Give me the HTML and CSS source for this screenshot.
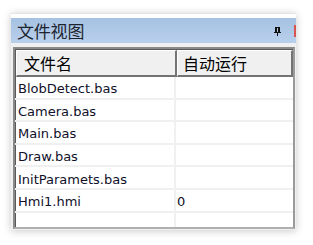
FILE: index.html
```html
<!DOCTYPE html>
<html>
<head>
<meta charset="utf-8">
<link rel="stylesheet" href="styles.css">
</head>
<body>
<div class="window">
  <div class="topgap"></div>
  <div class="titlebar">
    <span class="title">文件视图</span>
    <svg class="pin" width="7" height="9" viewBox="0 0 7 9">
      <rect x="1" y="0" width="5" height="1" fill="#111"/>
      <rect x="1" y="1" width="2" height="4" fill="#111"/>
      <rect x="4" y="1" width="2" height="4" fill="#111"/>
      <rect x="0" y="5" width="7" height="1" fill="#111"/>
      <rect x="3" y="6" width="1" height="3" fill="#111"/>
    </svg>
    <span class="closemark"></span>
  </div>
  <div class="gap"></div>
  <div class="list">
    <div class="header">
      <div class="hcell c1">文件名</div>
      <div class="hcell c2">自动运行</div>
    </div>
    <div class="rows">
      <div class="row"><div class="cell c1">BlobDetect.bas</div><div class="cell c2"></div></div>
      <div class="row"><div class="cell c1">Camera.bas</div><div class="cell c2"></div></div>
      <div class="row"><div class="cell c1">Main.bas</div><div class="cell c2"></div></div>
      <div class="row"><div class="cell c1">Draw.bas</div><div class="cell c2"></div></div>
      <div class="row"><div class="cell c1">InitParamets.bas</div><div class="cell c2"></div></div>
      <div class="row"><div class="cell c1">Hmi1.hmi</div><div class="cell c2">0</div></div>
      <div class="row filler"><div class="cell c1"></div><div class="cell c2"></div></div>
    </div>
  </div>
</div>
</body>
</html>
```

FILE: styles.css
```css
html, body {
  margin: 0;
  padding: 0;
  background: #ffffff;
}
body {
  width: 313px;
  height: 245px;
  overflow: hidden;
}
.window {
  margin-left: 11px;
  margin-top: 13px;
  width: 285px;
  height: 217px;
  background: #f0f0f0;
  box-shadow: 0 1px 8px rgba(0, 0, 0, 0.22);
  display: flex;
  flex-direction: column;
}
.topgap {
  height: 5px;
  background: #ffffff;
  border-top: 1px solid #e4e4e4;
  box-sizing: border-box;
}
.titlebar {
  height: 25px;
  background: linear-gradient(#a6c1e2, #b9d0ec);
  display: flex;
  align-items: center;
  padding-left: 6px;
  position: relative;
}
.title {
  font-family: "Noto Sans CJK SC", sans-serif;
  font-size: 17px;
  color: #1c2430;
  line-height: 25px;
  letter-spacing: -0.2px;
}
.pin {
  margin-left: auto;
  margin-right: 15px;
  margin-top: 2px;
}
.closemark {
  position: absolute;
  right: 0;
  top: 7px;
  width: 2px;
  height: 12px;
  background: #d9534f;
}
.gap {
  height: 4px;
}
.list {
  margin: 0 1px 1px 2px;
  flex: 1;
  border-top: 2px solid #8a8a8a;
  border-left: 2px solid #8a8a8a;
  border-right: 2px solid #9a9a9a;
  border-bottom: 2px solid #b0b0b0;
  background: #ffffff;
  display: flex;
  flex-direction: column;
  box-shadow: inset 1px 1px 0 #5a5a5a;
}
.header {
  display: flex;
  height: 27px;
  background: #f0f0f0;
  margin-left: 1px;
  margin-top: 1px;
}
.hcell {
  font-family: "Noto Sans CJK SC", sans-serif;
  font-size: 16px;
  color: #000;
  display: flex;
  align-items: center;
  box-sizing: border-box;
  border-top: 1px solid #ffffff;
  border-left: 1px solid #ffffff;
  border-right: 2px solid #737373;
  border-bottom: 2px solid #737373;
}
.header .c1 {
  width: 161px;
  padding-left: 7px;
}
.header .c2 {
  flex: 1;
  padding-left: 5px;
}
.rows {
  flex: 1;
  display: flex;
  flex-direction: column;
}
.row {
  display: flex;
  height: 22.6px;
  box-sizing: border-box;
  border-bottom: 2px solid #f0f0f0;
}
.row.filler {
  flex: 1;
  border-bottom: none;
}
.cell {
  font-family: "DejaVu Sans", sans-serif;
  font-size: 13px;
  color: #10102a;
  display: flex;
  align-items: center;
  padding-top: 3px;
}
.row .c1 {
  width: 161px;
  padding-left: 3px;
  box-sizing: border-box;
  border-right: 2px solid #f0f0f0;
}
.row .c2 {
  flex: 1;
  padding-left: 1px;
}
```
